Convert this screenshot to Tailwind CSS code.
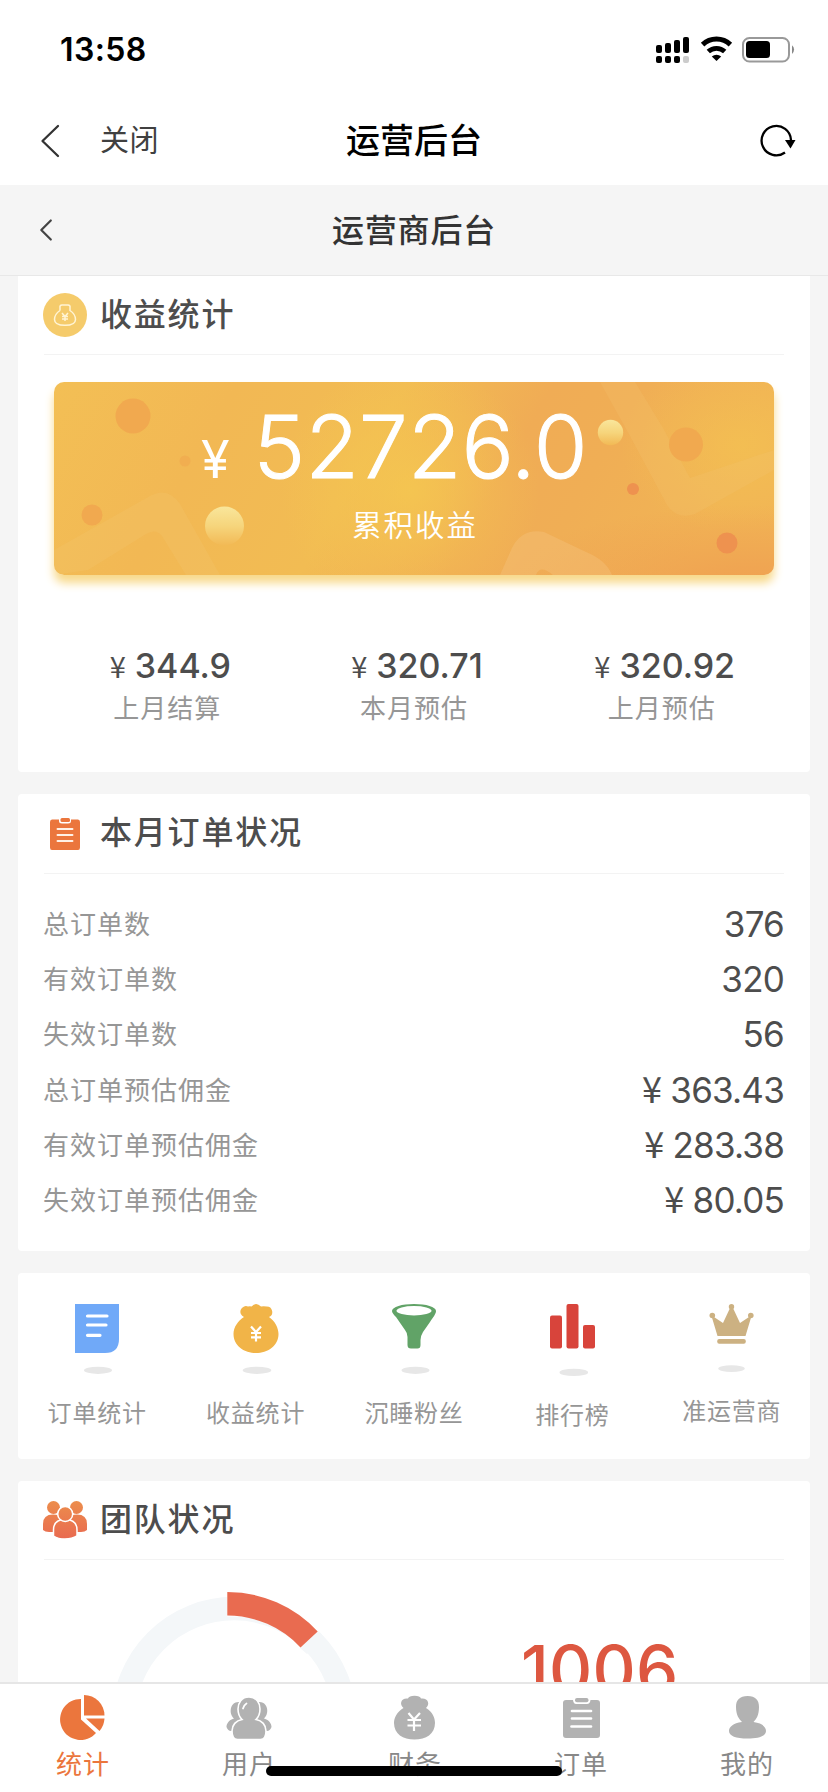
<!DOCTYPE html>
<html lang="zh-CN">
<head>
<meta charset="utf-8">
<title>运营后台</title>
<script src="https://cdn.jsdelivr.net/npm/@tailwindcss/browser@4"></script>
</head>
<body class="w-[828px] h-[1792px] overflow-hidden bg-[#f5f5f5] font-['Inter','Noto_Sans_CJK_SC',sans-serif] text-[#4d4d4d]">
<div class="w-[828px] h-[1792px] flex flex-col relative">

  <!-- status bar -->
  <div class="h-[96px] shrink-0 bg-white flex justify-between pl-[60px] pr-[33px]">
    <div class="mt-[30px] h-[40px] leading-[40px] text-[32px] font-semibold text-black tracking-[0.400px]">13:58</div>
    <svg class="mt-[30px]" width="140" height="40" viewBox="654 30 140 40">
      <g fill="#000">
        <rect x="655" y="45" width="6" height="8" rx="2"/><rect x="664" y="43" width="6" height="10" rx="2"/><rect x="673" y="40" width="6" height="13" rx="2"/><rect x="682" y="37" width="6" height="16" rx="2"/>
        <rect x="655" y="56" width="6" height="7" rx="2"/><rect x="664" y="56" width="6" height="7" rx="2"/><rect x="673" y="56" width="6" height="7" rx="2"/>
      </g>
      <rect x="682" y="56" width="6" height="7" rx="2" fill="#ccc"/>
      <path d="M701.6 44.6 A20 20 0 0 1 729.400 44.6" fill="none" stroke="#000" stroke-width="5"/>
      <path d="M707.3 51.6 A12 12 0 0 1 723.7 51.6" fill="none" stroke="#000" stroke-width="4.800"/>
      <path d="M715.500 61 L710.800 56.6 A7 7 0 0 1 720.200 56.6 Z"/>
      <rect x="742" y="38" width="46" height="23.500" rx="6.500" fill="none" stroke="#999" stroke-width="2"/>
      <rect x="745" y="41" width="24" height="17" rx="3.500"/>
      <path d="M791 45.300 a5.500 5.500 0 0 1 0 8.600z" fill="#888"/>
    </svg>
  </div>

  <!-- app navigation -->
  <div class="h-[89px] shrink-0 bg-white grid grid-cols-3 items-center">
    <div class="flex items-center pl-[40px]">
      <svg width="22" height="36" viewBox="40 122 22 36"><path d="M58 125 L42.500 140 L58 155" fill="none" stroke="#333" stroke-width="2.300" stroke-linecap="round" stroke-linejoin="round"/></svg>
      <span class="ml-[38px] leading-[40px] text-[29px] tracking-[0.500px] text-[#404040]">关闭</span>
    </div>
    <div class="text-center leading-[40px] text-[34px] font-medium text-black">运营后台</div>
    <div class="flex justify-end pr-[30px]">
      <svg width="40" height="36" viewBox="758 122 40 36"><path d="M791 139 A14.700 14.700 0 1 0 785 151.500" fill="none" stroke="#000" stroke-width="2.300"/><path d="M785 139 H795.500 L790.500 147.500Z"/></svg>
    </div>
  </div>

  <!-- page header -->
  <div class="h-[91px] shrink-0 border-b border-[#e8e8e8] grid grid-cols-[60px_1fr_60px] items-center">
    <svg class="ml-[38px]" width="16" height="26" viewBox="38 216 16 26"><path d="M50.800 219.500 L41.300 229 L50.800 238.500" fill="none" stroke="#444" stroke-width="2.200" stroke-linecap="round" stroke-linejoin="round"/></svg>
    <div class="pt-[2px] text-center leading-[40px] text-[32px] font-medium tracking-[0.8px] text-[#333]">运营商后台</div>
  </div>

  <main class="flex-1 min-h-0 overflow-hidden px-[18px] flex flex-col gap-[22px]">

    <!-- revenue -->
    <section class="h-[496px] shrink-0 bg-white rounded-b-[4px] px-[26px]">
      <div class="h-[79px] border-b border-[#f3f3f3] flex items-center">
        <svg class="-ml-px" width="44" height="44" viewBox="0 0 44 44"><circle cx="22" cy="22" r="22" fill="#f5cb6b"/><path d="M17 17.500 V15 Q16.500 12 19 12 H25 Q27.500 12 27 15 V17.500 C30 19.500 32.500 23 32.500 26.500 C32.500 31 29 32.300 22 32.300 C15 32.300 11.500 31 11.500 26.500 C11.500 23 14 19.500 17 17.500" fill="none" stroke="#fff4d4" stroke-width="1.500"/><path d="M19 20 L22 23.500 L25 20 M22 23.500 V28 M19 23.500 H25 M19 26 H25" fill="none" stroke="#fff4d4" stroke-width="1.500"/></svg>
        <h2 class="ml-[13px] leading-[40px] text-[32px] font-medium tracking-[1.800px]">收益统计</h2>
      </div>
      <div class="relative mt-[27px] mx-[10px] h-[193px] rounded-[10px] shadow-[0_8px_10px_#f8d98a]">
        <svg class="absolute inset-0 rounded-[10px]" width="720" height="193" viewBox="54 382 720 193">
          <defs>
            <linearGradient id="g" x1="0" y1="0" x2="1" y2=".15"><stop offset="0" stop-color="#f3bf55"/><stop offset=".25" stop-color="#f2b854"/><stop offset=".48" stop-color="#f2bc53"/><stop offset=".68" stop-color="#f0ac55"/><stop offset=".8" stop-color="#f0ae55"/><stop offset="1" stop-color="#f1b455"/></linearGradient>
            <radialGradient id="y"><stop offset="0" stop-color="#f5c850"/><stop offset="1" stop-color="#f5c850" stop-opacity="0"/></radialGradient>
            <radialGradient id="o"><stop offset="0" stop-color="#ef9b50"/><stop offset="1" stop-color="#ef9b50" stop-opacity="0"/></radialGradient>
            <linearGradient id="b" x1="0" y1="0" x2="0" y2="1"><stop offset="0" stop-color="#f9e69b"/><stop offset=".5" stop-color="#f6d57c"/><stop offset="1" stop-color="#f2b955"/></linearGradient>
          </defs>
          <rect x="54" y="382" width="720" height="193" fill="url(#g)"/>
          <ellipse cx="410" cy="490" rx="130" ry="130" fill="url(#y)" opacity=".8"/>
          <ellipse cx="740" cy="445" rx="120" ry="90" fill="url(#y)" opacity=".5"/>
          <ellipse cx="750" cy="590" rx="250" ry="85" fill="url(#o)" opacity=".8"/>
          <path d="M54 550 L150 496 Q168 486 180 504 L220 575 H186 L162 536 Q156 528 146 534 L88 570 L54 575Z" fill="#f4c36a" opacity=".32"/>
          <path d="M600 382 H635 L663 428 L690 478 L774 450 V470 L695 514 Q677 520 667 505 L630 436Z" fill="#f5c470" opacity=".25"/>
          <path d="M500 575 L512 548 Q522 528 544 532 L586 552 Q606 560 612 575 H553 Q540 564 536 575Z" fill="#f5c47c" opacity=".4"/>
          <g fill="#f1a94f"><circle cx="133" cy="416" r="17.500"/><circle cx="92" cy="515" r="10.500"/><circle cx="185" cy="461" r="5.500" opacity=".7"/><circle cx="686" cy="444.500" r="17"/></g>
          <g fill="#ee924f"><circle cx="633" cy="489" r="6"/><circle cx="727" cy="543" r="10.500"/></g>
          <circle cx="224.500" cy="526" r="19.500" fill="url(#b)"/><circle cx="610.500" cy="432.500" r="12.700" fill="url(#b)"/>
        </svg>
        <div class="relative h-full flex flex-col text-white">
          <div class="mt-[15px] pl-[147px] h-[100px] leading-[100px] flex items-baseline">
            <span class="text-[52px] leading-[100px]">¥</span><span class="ml-[24px] text-[87px] font-light tracking-[0.200px] [-webkit-text-stroke:1px_#fff]">52726.0</span>
          </div>
          <div class="mt-[8px] pl-[2px] text-center leading-[40px] text-[29.500px] font-[350] tracking-[2px]">累积收益</div>
        </div>
      </div>
      <div class="mt-[68px] grid grid-cols-3 text-center">
        <div><div class="h-[46px] leading-[46px] text-[34px] font-medium pl-[6px]"><span class="mr-[9px] text-[29px] leading-none font-normal font-['Noto_Sans_CJK_SC']">¥</span>344.9</div><div class="leading-[40px] text-[26px] tracking-[1px] text-[#969696]">上月结算</div></div>
        <div><div class="h-[46px] leading-[46px] text-[34px] font-medium pl-[6px]"><span class="mr-[9px] text-[29px] leading-none font-normal font-['Noto_Sans_CJK_SC']">¥</span>320.71</div><div class="leading-[40px] text-[26px] tracking-[1px] text-[#969696]">本月预估</div></div>
        <div><div class="h-[46px] leading-[46px] text-[34px] font-medium pl-[8px]"><span class="mr-[9px] text-[29px] leading-none font-normal font-['Noto_Sans_CJK_SC']">¥</span>320.92</div><div class="pl-[2px] leading-[40px] text-[26px] tracking-[1px] text-[#969696]">上月预估</div></div>
      </div>
    </section>

    <!-- monthly orders -->
    <section class="h-[457px] shrink-0 bg-white rounded-[4px] px-[26px]">
      <div class="h-[80px] border-b border-[#f3f3f3] flex items-center">
        <svg class="-ml-px" width="44" height="36" viewBox="43 816 44 36"><path d="M52 819.500 H59 V821 Q59 823.500 62 823.500 H68 Q71 823.500 71 821 V819.500 H78 Q80 819.500 80 822 V847.500 Q80 850 78 850 H52 Q50 850 50 847.500 V822 Q50 819.500 52 819.500Z" fill="#eb763d"/><rect x="60.500" y="818" width="9.500" height="4" rx="1.500" fill="#eb763d"/><path d="M57.500 829 H72.500 M57.500 835 H72.500 M57.500 841 H72.500" stroke="#fff1e6" stroke-width="1.900" stroke-linecap="round"/></svg>
        <h2 class="ml-[13px] -mt-[2px] leading-[40px] text-[32px] font-medium tracking-[1.800px]">本月订单状况</h2>
      </div>
      <div class="mt-[22px]">
        <div class="h-[55.200px] flex justify-between items-center leading-[40px]"><span class="-ml-px pt-[2px] text-[26px] tracking-[1px] text-[#969696]">总订单数</span><span class="text-[35px] tracking-[-0.800px]">376</span></div>
        <div class="h-[55.200px] flex justify-between items-center leading-[40px]"><span class="-ml-px pt-[2px] text-[26px] tracking-[1px] text-[#969696]">有效订单数</span><span class="text-[35px] tracking-[-0.800px]">320</span></div>
        <div class="h-[55.200px] flex justify-between items-center leading-[40px]"><span class="-ml-px pt-[2px] text-[26px] tracking-[1px] text-[#969696]">失效订单数</span><span class="text-[35px] tracking-[-0.800px]">56</span></div>
        <div class="h-[55.200px] flex justify-between items-center leading-[40px]"><span class="-ml-px pt-[3px] text-[26px] tracking-[1px] text-[#969696]">总订单预估佣金</span><span class="text-[35px] tracking-[-0.800px]"><span class="font-['Noto_Sans_CJK_SC'] text-[36px] leading-none">¥</span> 363.43</span></div>
        <div class="h-[55.200px] flex justify-between items-center leading-[40px]"><span class="-ml-px pt-[3px] text-[26px] tracking-[1px] text-[#969696]">有效订单预估佣金</span><span class="text-[35px] tracking-[-0.800px]"><span class="font-['Noto_Sans_CJK_SC'] text-[36px] leading-none">¥</span> 283.38</span></div>
        <div class="h-[55.200px] flex justify-between items-center leading-[40px]"><span class="-ml-px pt-[3px] text-[26px] tracking-[1px] text-[#969696]">失效订单预估佣金</span><span class="text-[35px] tracking-[-0.800px]"><span class="font-['Noto_Sans_CJK_SC'] text-[36px] leading-none">¥</span> 80.05</span></div>
      </div>
    </section>

    <!-- shortcuts -->
    <section class="h-[186px] shrink-0 bg-white rounded-[4px] pt-[31px] grid grid-cols-5 text-[24px] tracking-[0.800px] leading-[38px] text-[#969696]">
      <div class="flex flex-col items-center">
        <svg width="48" height="70" viewBox="73 1304 48 70"><path d="M75 1304 H119 V1339 Q119 1353 105 1353 H75Z" fill="#70a9f8"/><path d="M87.500 1316 H107 M87.500 1325 H106 M87.500 1335.300 H100" stroke="#fff" stroke-width="3.200" stroke-linecap="round"/><ellipse cx="98" cy="1370.300" rx="14" ry="3.600" fill="#e7e7e7"/></svg>
        <span class="mt-[21px]">订单统计</span>
      </div>
      <div class="flex flex-col items-center">
        <svg width="48" height="70" viewBox="231.500 1304 48 70"><path d="M243.500 1317 A5.500 5.500 0 0 1 247.500 1306.500 Q249.500 1306 251 1306.500 Q255.500 1301.500 260.500 1306.500 Q263 1305.800 266 1306.500 A5.500 5.500 0 0 1 268.500 1317 C274.500 1321 278 1328 278 1334 C278 1346 267 1353 255.500 1353 C244 1353 233 1346 233 1334 C233 1327 237.500 1321 243.500 1317Z" fill="#f1b448"/><path d="M250.500 1326.500 L255.500 1332 L260.500 1326.500 M255.500 1332 V1341.500 M250.500 1333 H260.500 M250.500 1337.300 H260.500" fill="none" stroke="#fff" stroke-width="2.200"/><ellipse cx="256.500" cy="1370.300" rx="14.300" ry="3.600" fill="#e7e7e7"/></svg>
        <span class="mt-[21px]">收益统计</span>
      </div>
      <div class="flex flex-col items-center">
        <svg width="48" height="70" viewBox="390 1304 48 70"><path d="M392 1311 C392 1306.800 402 1304 414 1304 C426 1304 436 1306.800 436 1311 C436 1314 433 1317.500 430 1322 L423 1332 Q420.500 1336 420.500 1340 V1345 Q420.500 1348.500 417.500 1348.500 H411 Q407.500 1348.500 407.500 1345 V1337 Q407.500 1333 405 1330 L396 1317 Q392 1313 392 1311Z" fill="#61a367"/><ellipse cx="414" cy="1310.800" rx="17.500" ry="4.700" fill="#fff"/><ellipse cx="415.500" cy="1370.300" rx="14" ry="3.600" fill="#e7e7e7"/></svg>
        <span class="mt-[21px]">沉睡粉丝</span>
      </div>
      <div class="flex flex-col items-center">
        <svg width="48" height="72" viewBox="548 1304 48 72"><g fill="#d8443b"><rect x="550" y="1315.500" width="12" height="33" rx="2"/><rect x="566.500" y="1304" width="12" height="44.500" rx="2"/><rect x="583" y="1325" width="12" height="23.500" rx="2"/></g><ellipse cx="573.800" cy="1372.400" rx="14.300" ry="3.600" fill="#e7e7e7"/></svg>
        <span class="mt-[21px]">排行榜</span>
      </div>
      <div class="flex flex-col items-center">
        <svg width="48" height="68" viewBox="706.500 1304 48 68"><g fill="#ccb182"><circle cx="731" cy="1306.700" r="2.700"/><circle cx="711.800" cy="1315.500" r="2.800"/><circle cx="750.300" cy="1315.500" r="2.800"/><path d="M711 1316 L713.500 1317 L722.500 1323 L730 1307 H732 L739.500 1323 L748.500 1317 L751 1316 L745 1336 H717Z"/><rect x="716.700" y="1339" width="28.600" height="4.700" rx="2"/></g><ellipse cx="731" cy="1368.600" rx="13.300" ry="3.400" fill="#e7e7e7"/></svg>
        <span class="mt-[21px] pl-[2px]">准运营商</span>
      </div>
    </section>

    <!-- team -->
    <section class="h-[400px] shrink-0 bg-white rounded-t-[4px] px-[26px]">
      <div class="h-[79px] border-b border-[#f3f3f3] flex items-center">
        <svg class="-ml-px" width="44" height="38" viewBox="43 1501 44 38"><defs><linearGradient id="t" gradientUnits="userSpaceOnUse" x1="0" y1="1501" x2="0" y2="1538"><stop offset="0" stop-color="#ec8d4c"/><stop offset="1" stop-color="#e96b50"/></linearGradient></defs><g fill="url(#t)"><circle cx="53.500" cy="1507.500" r="6.500"/><circle cx="76.500" cy="1507.500" r="6.500"/><path d="M43 1530 V1524 Q43 1514.500 53 1514.500 Q60 1514.500 63 1520 V1532 H49 Q45 1532 43 1530Z"/><path d="M87 1530 V1524 Q87 1514.500 77 1514.500 Q70 1514.500 67 1520 V1532 H81 Q85 1532 87 1530Z"/><g stroke="#fff" stroke-width="1.500"><path d="M53.500 1536 V1530 Q53.500 1519.500 65 1519.500 Q77 1519.500 77 1530 V1536 Q72 1539 65 1539 Q58 1539 53.500 1536Z"/><circle cx="65.200" cy="1514" r="7.500"/></g></g></svg>
        <h2 class="ml-[13px] leading-[40px] text-[32px] font-medium tracking-[1.800px]">团队状况</h2>
      </div>
      <div class="flex">
        <svg class="ml-[66px] mt-[30px]" width="252" height="252" viewBox="110 1590 252 252"><circle cx="234" cy="1719" r="110.400" fill="none" stroke="#f4f7f9" stroke-width="23.500"/><path d="M227.300 1591 V1616.500 H300.500 V1650 L320 1632 L318 1591Z" fill="#fff"/><path d="M300 1648 L318 1631 A122.200 122.200 0 0 1 324 1637 L307 1654Z" fill="#f4f7f9"/><path d="M227.300 1592 A123.200 123.200 0 0 1 317.700 1631.500 L300.500 1647.500 A100 100 0 0 0 227.300 1615.500Z" fill="#e96b50"/></svg>
        <div class="ml-[159px] mt-[70px] leading-[80px] text-[67px] font-medium tracking-[0.200px] text-[#dd5740]">1006</div>
      </div>
    </section>
  </main>

  <!-- tab bar -->
  <nav class="h-[110px] shrink-0 bg-white border-t-2 border-[#e6e6e6] grid grid-cols-[repeat(5,166px)] pt-[10px] text-[26px] tracking-[1px] leading-[36px] text-[#888]">
    <div class="flex flex-col items-center text-[#eb763d]">
      <svg width="46" height="46" viewBox="60 1694 46 46"><path d="M81 1699 V1719.500 L96 1733 A20.500 20.500 0 1 1 81 1699Z" fill="#eb763d"/><path d="M84 1695 A20.500 20.500 0 0 1 104.500 1715.500 H84Z" fill="#eb763d"/><path d="M86 1718.500 H104.500 Q104 1726 99.500 1731Z" fill="#eb763d"/></svg>
      <span class="mt-[7px]">统计</span>
    </div>
    <div class="flex flex-col items-center">
      <svg width="46" height="46" viewBox="226.500 1694 46 46"><g fill="#b2b2b2"><path d="M240 1702 C231 1701 228.500 1713 234.500 1718.500 C229 1720 227 1724 227 1727 Q228.500 1731 231.500 1731 L249 1731 V1702Z"/><path d="M259 1702 C268 1701 270.500 1713 264.500 1718.500 C270 1720 272 1724 272 1727 Q270.500 1731 267.500 1731 L250 1731 V1702Z"/><path d="M249.500 1697 C242 1697 238.500 1703 238.500 1709 C238.500 1714.500 241 1718 242.500 1719.500 C236.500 1720.500 232.500 1725 232.500 1731 C232.500 1736 234 1739.500 238 1739.500 H261 C265 1739.500 266.500 1736 266.500 1731 C266.500 1725 262.500 1720.500 256.500 1719.500 C258 1718 260.500 1714.500 260.500 1709 C260.500 1703 257 1697 249.500 1697Z" stroke="#fff" stroke-width="1.600"/></g><path d="M243.500 1708.500 Q244.500 1705 247 1703.500" stroke="#fff" stroke-width="1.800" fill="none" stroke-linecap="round"/></svg>
      <span class="mt-[7px]">用户</span>
    </div>
    <div class="flex flex-col items-center">
      <svg width="46" height="46" viewBox="392 1694 46 46"><path d="M403.500 1708 C399 1704 401 1697.500 408 1698.500 Q409 1695.800 414.500 1695.800 Q420 1695.800 421 1698.500 C428 1697.500 430.500 1704 426 1708 C432.500 1712 435 1717.500 435 1723 C435 1734 426 1739.500 414.500 1739.500 C403 1739.500 394 1734 394 1723 C394 1717.500 397 1712 403.500 1708Z" fill="#b2b2b2"/><path d="M408.500 1713 L414 1719.500 L420 1713 M414 1719 V1731 M407.500 1720 H421 M407.500 1725.500 H421" fill="none" stroke="#fff" stroke-width="2.200"/></svg>
      <span class="mt-[7px]">财务</span>
    </div>
    <div class="flex flex-col items-center">
      <svg width="46" height="46" viewBox="558 1694 46 46"><path d="M566 1700 H573 Q573.500 1704 576 1704 H587 Q590 1704 590.500 1700 H597 Q600 1700 600 1703 V1735 Q600 1738 597 1738 H566 Q563 1738 563 1735 V1703 Q563 1700 566 1700Z" fill="#b2b2b2"/><rect x="575" y="1698" width="13.500" height="4.200" rx="2" fill="#b2b2b2"/><path d="M572 1711 H591 M572 1718.500 H591 M571.500 1726.500 H591" stroke="#fff" stroke-width="2.700" stroke-linecap="round"/></svg>
      <span class="mt-[7px]">订单</span>
    </div>
    <div class="flex flex-col items-center">
      <svg width="46" height="46" viewBox="724 1694 46 46"><path d="M747.700 1696 C739.500 1696 736 1700 736 1707 C736 1715 739 1719 742 1722 C733 1723 729 1727 729 1731 C729 1736 736 1738.500 747.500 1738.500 C759 1738.500 766 1736 766 1731 C766 1727 762 1723 753.500 1722 C756.500 1719 759 1715 759 1707 C759 1700 755.500 1696 747.700 1696Z" fill="#b2b2b2"/></svg>
      <span class="mt-[7px]">我的</span>
    </div>
  </nav>

  <!-- home indicator -->
  <div class="absolute left-[266px] top-[1766px] w-[296px] h-[10px] rounded-full bg-black"></div>
</div>
</body>
</html>
